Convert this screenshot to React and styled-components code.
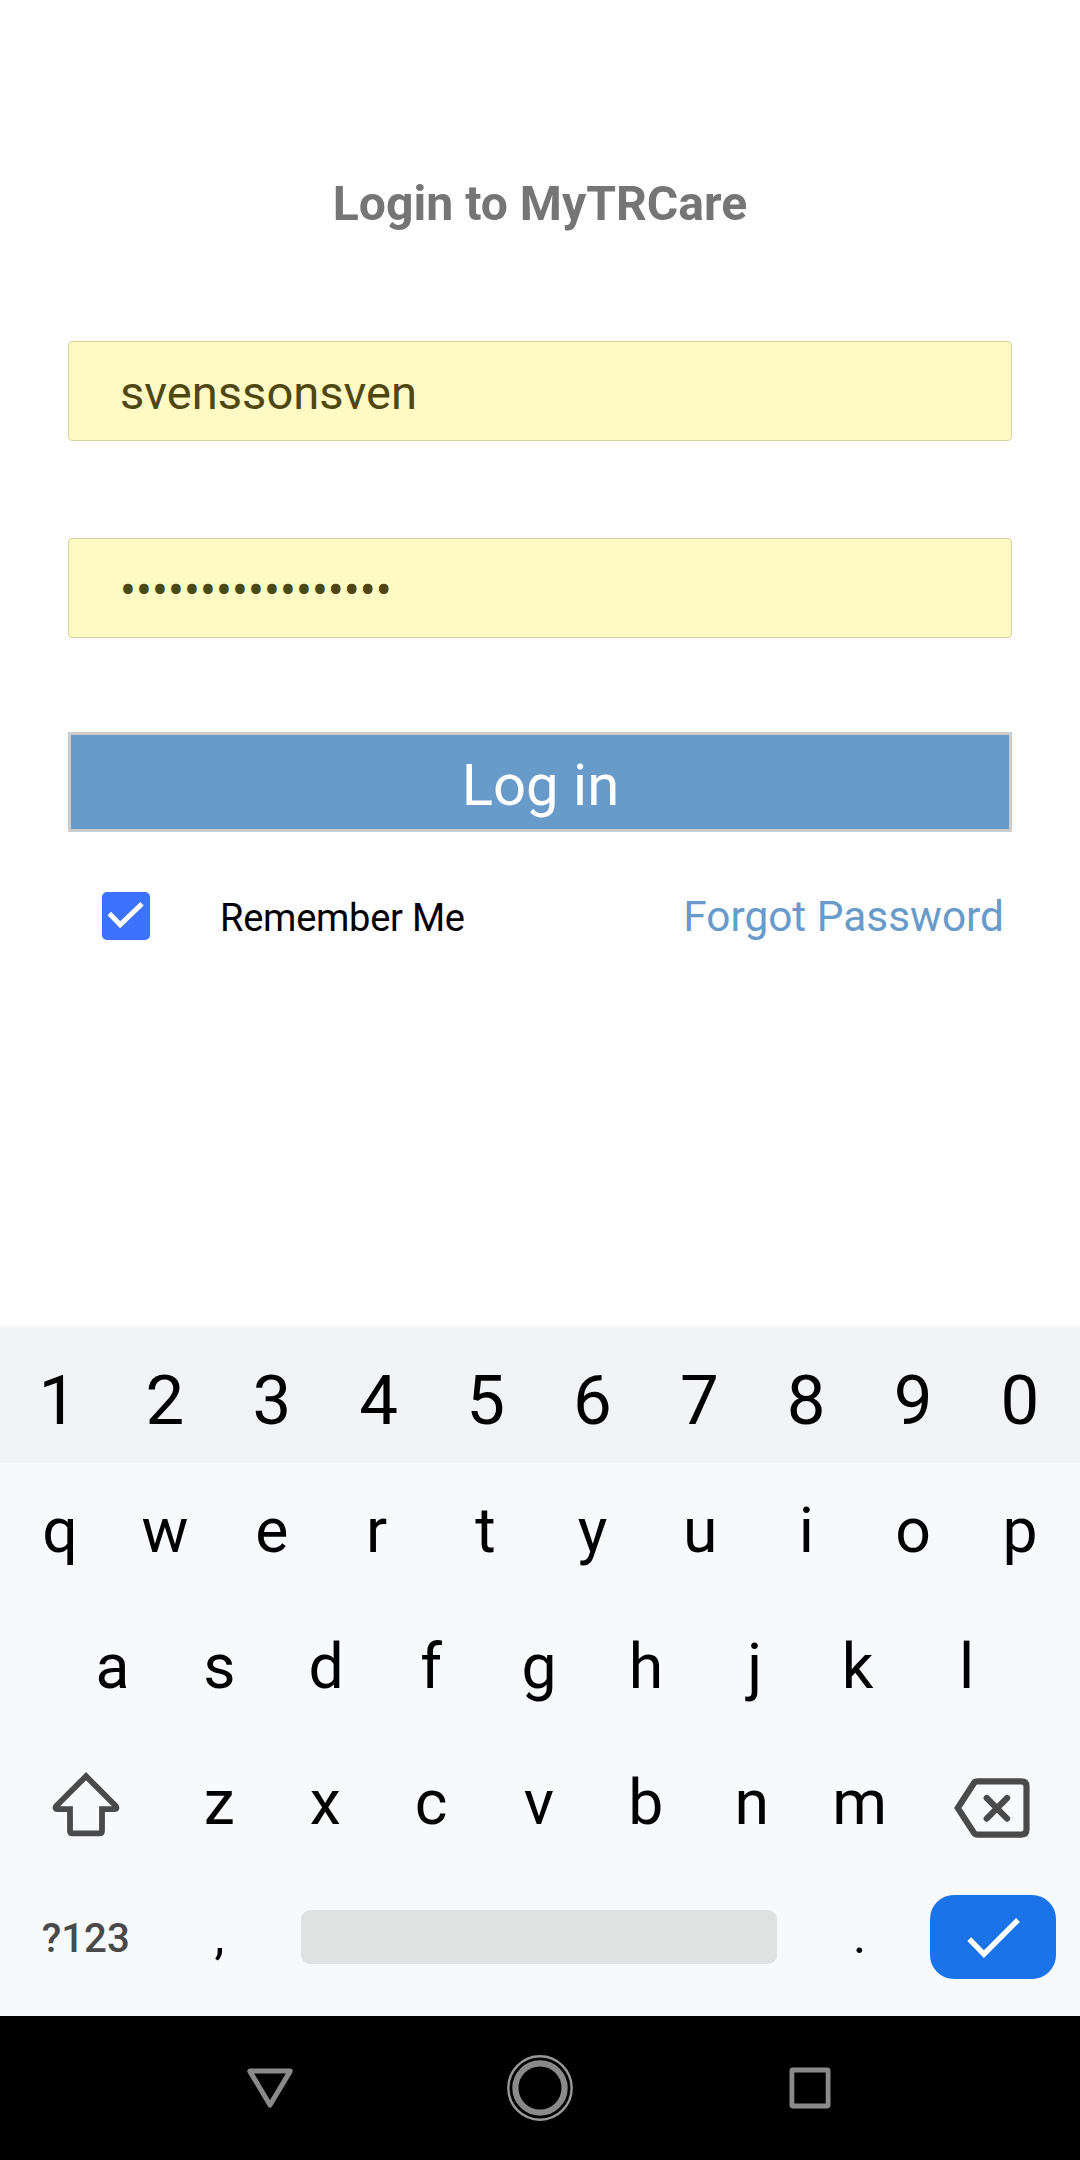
import React from "react";
import styled, { createGlobalStyle } from "styled-components";

const GlobalStyle = createGlobalStyle`
  *, *::before, *::after { box-sizing: border-box; }
  body { margin: 0; background: #fefefe; }
`;

const Screen = styled.div`
  width: 1080px;
  height: 2160px;
  display: flex;
  flex-direction: column;
  overflow: hidden;
  background: #fefefe;
  font-family: Roboto, "Liberation Sans", sans-serif;
`;

const LoginForm = styled.main`
  flex: 1;
  display: flex;
  flex-direction: column;
  padding: 176px 68px 0;
`;

const Title = styled.h1`
  margin: 0 0 109px;
  height: 56px;
  line-height: 56px;
  text-align: center;
  font-size: 48.1px;
  font-weight: 700;
  color: #757575;
`;

const Field = styled.div`
  height: 100px;
  margin-bottom: ${(p) => p.$gap}px;
  padding: ${(p) => p.$padTop}px 0 0 51px;
  border: 1px solid #d9d3a1;
  border-radius: 4px;
  background: #fff9c4;
  color: #4e4712;
  font-size: ${(p) => p.$size}px;
  line-height: 60px;
  white-space: nowrap;
`;

const LoginButton = styled.button`
  height: 100px;
  padding: 5px 0 0 1px;
  border: 3px solid #ccc;
  background: #689aca;
  color: #fff;
  font-family: inherit;
  font-size: 58px;
  line-height: 70px;
`;

const Options = styled.div`
  display: flex;
  align-items: center;
  height: 48px;
  margin-top: 60px;
  padding: 0 8px 0 34px;
`;

const Checkbox = styled.span`
  display: flex;
  width: 48px;
  height: 48px;
  border-radius: 5px;
  background: #3b73ff;
`;

const RememberLabel = styled.span`
  margin-left: 70px;
  padding-top: 3px;
  font-size: 38px;
  line-height: 44px;
  letter-spacing: -0.25px;
  color: #000;
`;

const ForgotLink = styled.a`
  margin-left: auto;
  padding-top: 1px;
  font-size: 42.4px;
  line-height: 48px;
  color: #689aca;
`;

const Keyboard = styled.section`
  background: #f8f9fb;
  height: 694px;
`;

const TopShade = styled.div`
  height: 9px;
  background: linear-gradient(#fefefe, #fbfbfb 35%, #f1f2f2);
`;

const KeyRow = styled.div`
  display: grid;
  grid-template-columns: ${(p) => p.$columns || "repeat(10, 106.9px)"};
  justify-content: center;
  height: 136px;
  padding-right: 2px;
`;

const NumberRow = styled(KeyRow)`
  height: 132px;
  padding-top: 6px;
  background: #f1f3f4;
`;

const BottomRow = styled(KeyRow)`
  height: 132px;
`;

const Key = styled.div`
  display: flex;
  align-items: center;
  justify-content: center;
  color: #000;
  font-size: ${(p) => p.$size || 62.5}px;
  line-height: 1;
  padding-bottom: ${(p) => p.$lift || 0}px;
  transform: translateX(${(p) => p.$nudge || 0}px);
`;

const SymbolKey = styled(Key)`
  color: #4a4a4a;
  font-size: 40.2px;
  font-weight: 500;
  padding-top: 4px;
  padding-left: 2px;
`;

const SpaceBar = styled.div`
  align-self: center;
  justify-self: center;
  width: 476px;
  height: 54px;
  border-radius: 9px;
  background: #e0e2e1;
`;

const EnterKey = styled.div`
  align-self: center;
  justify-self: center;
  display: flex;
  width: 126px;
  height: 84px;
  border-radius: 24px;
  background: #1b73e9;
`;

const NavBar = styled.nav`
  display: flex;
  align-items: center;
  justify-content: center;
  gap: 200px;
  height: 144px;
  background: #000;
`;

// Optical centring: glyphs with uneven side bearings are shifted to sit mid-key.
const nudges = { q: 2, r: -2, u: 1, a: 1, s: 1, d: 1, f: -1, j: 2, k: -2, z: 1, c: -1, n: -1 };

const letters = (text, props) =>
  text.split("").map((c) => (
    <Key key={c} $nudge={nudges[c]} {...props}>
      {c}
    </Key>
  ));

export default function App() {
  return (
    <>
      <GlobalStyle />
      <Screen>
        <LoginForm>
          <Title>Login to MyTRCare</Title>
          <Field $gap={97} $size={47.1} $padTop={21}>svenssonsven</Field>
          <Field $gap={94} $size={47.4} $padTop={22}>{"•".repeat(17)}</Field>
          <LoginButton>Log in</LoginButton>
          <Options>
            <Checkbox>
              <svg width="48" height="48" viewBox="0 0 48 48" fill="none">
                <path d="M7.3 21.6 L18.2 32.8 L40 11.8" stroke="#fff" strokeWidth="5" />
              </svg>
            </Checkbox>
            <RememberLabel>Remember Me</RememberLabel>
            <ForgotLink>Forgot Password</ForgotLink>
          </Options>
        </LoginForm>

        <Keyboard>
          <TopShade />
          <NumberRow>{letters("1234567890", { $size: 69 })}</NumberRow>
          <KeyRow>{letters("qwertyuiop")}</KeyRow>
          <KeyRow $columns="repeat(9, 106.9px)">{letters("asdfghjkl")}</KeyRow>
          <KeyRow $columns="160.3px repeat(7, 106.9px) 160.3px">
            <Key $nudge={1}>
              <svg width="72" height="72" viewBox="50 1767 72 72" fill="none" stroke="#4a4a4a" strokeWidth="5.8">
                <path d="M86 1776.2 L56.2 1806 Q54.4 1809 57.5 1809.2 H70 V1831 Q70 1833.4 72.4 1833.4 H99.6 Q102 1833.4 102 1831 V1809.2 H114.5 Q117.6 1809 115.8 1806 Z" />
              </svg>
            </Key>
            {letters("zxcvbnm")}
            <Key $nudge={0.5}>
              <svg width="84" height="72" viewBox="951.5 1767 84 72" fill="none" stroke="#4a4a4a" strokeWidth="6.2">
                <path d="M957.8 1808 L973.8 1783.3 Q975 1781.4 977.2 1781.4 H1021.5 Q1026.5 1781.4 1026.5 1786.4 V1829.6 Q1026.5 1834.6 1021.5 1834.6 H977.2 Q975 1834.6 973.8 1832.7 Z" />
                <path d="M986.7 1798 L1007.1 1818.6 M1007.1 1798 L986.7 1818.6" strokeLinecap="round" />
              </svg>
            </Key>
          </KeyRow>
          <BottomRow $columns="160.3px 106.9px 534.5px 106.9px 160.3px">
            <SymbolKey>?123</SymbolKey>
            <Key $size={50} $lift={2} $nudge={1}>,</Key>
            <SpaceBar />
            <Key $size={50} $lift={2}>.</Key>
            <EnterKey>
              <svg width="126" height="84" viewBox="930 1895 126 84" fill="none">
                <path d="M969.3 1939.2 L983.9 1954.2 L1018 1920" stroke="#fff" strokeWidth="5.4" />
              </svg>
            </EnterKey>
          </BottomRow>
        </Keyboard>

        <NavBar>
          <svg width="70" height="70" viewBox="-35 -35 70 70" fill="none">
            <path d="M-20.2 -16.9 H20.2 L0 17 Z" stroke="#8a8a8a" strokeWidth="5" strokeLinejoin="round" />
          </svg>
          <svg width="70" height="70" viewBox="-35 -35 70 70" fill="none">
            <circle r="31.7" stroke="#999" strokeWidth="2.4" />
            <circle r="24.6" stroke="#8a8a8a" strokeWidth="6.2" />
          </svg>
          <svg width="70" height="70" viewBox="-35 -35 70 70" fill="none">
            <rect x="-18.1" y="-18" width="36.2" height="36" rx="1" stroke="#8a8a8a" strokeWidth="4.8" />
          </svg>
        </NavBar>
      </Screen>
    </>
  );
}
